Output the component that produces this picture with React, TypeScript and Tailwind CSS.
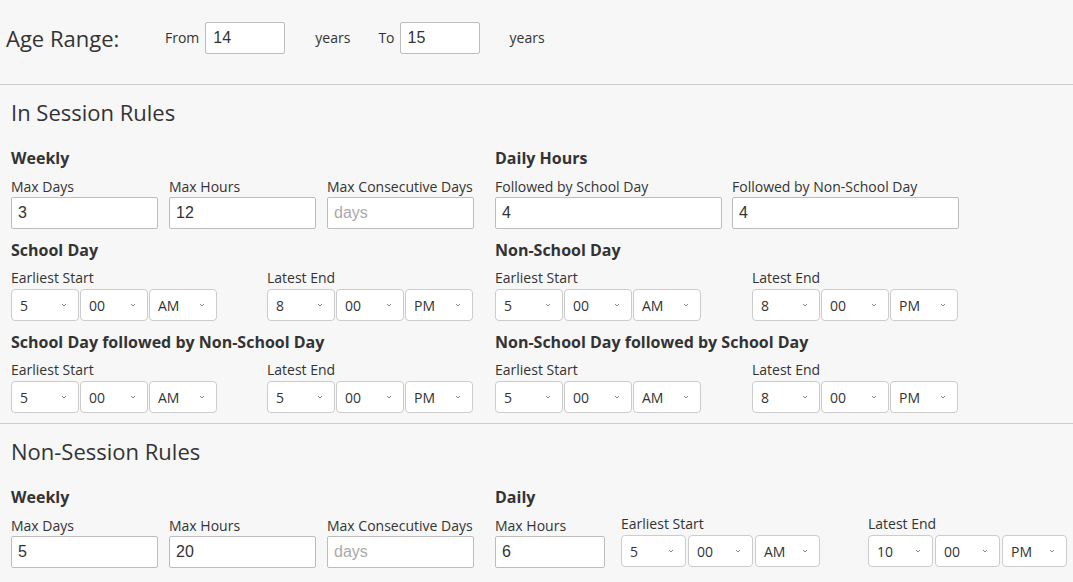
import React from "react";

function Chevron() {
  return (
    <svg width="6" height="4" viewBox="0 0 6 4" className="shrink-0">
      <polyline points="1,1 3,3 5,1" fill="none" stroke="#888" strokeWidth="1" />
    </svg>
  );
}

function Select({ value, w }: { value: string; w: string }) {
  return (
    <div
      className={`${w} h-[32px] border border-[#cccccc] rounded-[4px] bg-white flex items-center justify-between pl-[8px] pr-[11px] text-[14px] text-[#333]`}
    >
      <span>{value}</span>
      <Chevron />
    </div>
  );
}

function TextInput({ value, w, placeholder }: { value?: string; w: string; placeholder?: string }) {
  return (
    <input
      defaultValue={value}
      placeholder={placeholder}
      className={`${w} h-[32px] border border-[#bdbdbd] rounded-[2px] bg-white pl-[6px] text-[16px] text-[#333] font-['Liberation_Sans',Arial,sans-serif] placeholder:text-[#aaaaaa] outline-none`}
    />
  );
}

function Label({ children }: { children: React.ReactNode }) {
  return <div className="text-[14px] leading-[20px] text-[#333]">{children}</div>;
}

function Heading({ children }: { children: React.ReactNode }) {
  return <div className="text-[16px] leading-[22px] font-bold text-[#333]">{children}</div>;
}

function TimeGroup({
  label,
  h,
  m,
  ap,
  w = "w-[68px]",
  gap = "gap-[1px]",
}: {
  label: string;
  h: string;
  m: string;
  ap: string;
  w?: string;
  gap?: string;
}) {
  return (
    <div>
      <Label>{label}</Label>
      <div className={`flex ${gap} mt-[1px]`}>
        <Select value={h} w={w} />
        <Select value={m} w={w} />
        <Select value={ap} w={w} />
      </div>
    </div>
  );
}

function TimeBlock({
  title,
  start,
  end,
  endMl,
}: {
  title: string;
  start: string;
  end: string;
  endMl: string;
}) {
  return (
    <div className="w-[464px]">
      <Heading>{title}</Heading>
      <div className="flex mt-[7px]">
        <TimeGroup label="Earliest Start" h={start} m="00" ap="AM" />
        <div className={endMl}>
          <TimeGroup label="Latest End" h={end} m="00" ap="PM" />
        </div>
      </div>
    </div>
  );
}

function WeeklyBlock({ days, hours }: { days: string; hours: string }) {
  return (
    <div className="w-[464px]">
      <Heading>Weekly</Heading>
      <div className="flex gap-[11px] mt-[8px]">
        <div>
          <Label>Max Days</Label>
          <TextInput value={days} w="w-[147px]" />
        </div>
        <div>
          <Label>Max Hours</Label>
          <TextInput value={hours} w="w-[147px]" />
        </div>
        <div>
          <Label>Max Consecutive Days</Label>
          <TextInput placeholder="days" w="w-[147px]" />
        </div>
      </div>
    </div>
  );
}

export default function App() {
  return (
    <div className="min-h-screen w-full bg-[#f7f7f7] text-[#333] font-['Open_Sans',sans-serif]">
      {/* Age range */}
      <div className="h-[85px] border-b border-[#cccccc] flex items-start pt-[22px] pl-[6px]">
        <div className="w-[159px] text-[22px] leading-[32px]">Age Range:</div>
        <span className="text-[14px] leading-[32px]">From</span>
        <input
          defaultValue="14"
          className="ml-[6px] w-[80px] h-[32px] border border-[#bdbdbd] rounded-[2px] bg-white pl-[7px] text-[16px] text-[#333] font-['Liberation_Sans',Arial,sans-serif] outline-none"
        />
        <span className="ml-[30px] text-[14px] leading-[32px]">years</span>
        <span className="ml-[28px] text-[14px] leading-[32px]">To</span>
        <input
          defaultValue="15"
          className="ml-[5px] w-[80px] h-[32px] border border-[#bdbdbd] rounded-[2px] bg-white pl-[7px] text-[16px] text-[#333] font-['Liberation_Sans',Arial,sans-serif] outline-none"
        />
        <span className="ml-[30px] text-[14px] leading-[32px]">years</span>
      </div>

      {/* In Session Rules */}
      <section className="pl-[11px] pt-[13px] pb-[10px] border-b border-[#cccccc]">
        <h2 className="text-[22px] leading-[28px]">In Session Rules</h2>
        <div className="mt-[21px] flex flex-col gap-[10px]">
          <div className="flex gap-[20px]">
            <WeeklyBlock days="3" hours="12" />
            <div className="w-[464px]">
              <Heading>Daily Hours</Heading>
              <div className="flex gap-[10px] mt-[8px]">
                <div>
                  <Label>Followed by School Day</Label>
                  <TextInput value="4" w="w-[227px]" />
                </div>
                <div>
                  <Label>Followed by Non-School Day</Label>
                  <TextInput value="4" w="w-[227px]" />
                </div>
              </div>
            </div>
          </div>
          <div className="flex gap-[20px]">
            <TimeBlock title="School Day" start="5" end="8" endMl="ml-[50px]" />
            <TimeBlock title="Non-School Day" start="5" end="8" endMl="ml-[51px]" />
          </div>
          <div className="flex gap-[20px]">
            <TimeBlock title="School Day followed by Non-School Day" start="5" end="5" endMl="ml-[50px]" />
            <TimeBlock title="Non-School Day followed by School Day" start="5" end="8" endMl="ml-[51px]" />
          </div>
        </div>
      </section>

      {/* Non-Session Rules */}
      <section className="pl-[11px] pt-[13px] pb-[10px]">
        <h2 className="text-[22px] leading-[28px]">Non-Session Rules</h2>
        <div className="mt-[21px] flex gap-[20px]">
          <WeeklyBlock days="5" hours="20" />
          <div>
            <Heading>Daily</Heading>
            <div className="flex mt-[8px]">
              <div>
                <Label>Max Hours</Label>
                <TextInput value="6" w="w-[110px]" />
              </div>
              <div className="ml-[16px] -mt-[2px]">
                <TimeGroup label="Earliest Start" h="5" m="00" ap="AM" w="w-[65px]" gap="gap-[2px]" />
              </div>
              <div className="ml-[48px] -mt-[2px]">
                <TimeGroup label="Latest End" h="10" m="00" ap="PM" w="w-[65px]" gap="gap-[2px]" />
              </div>
            </div>
          </div>
        </div>
      </section>
    </div>
  );
}
